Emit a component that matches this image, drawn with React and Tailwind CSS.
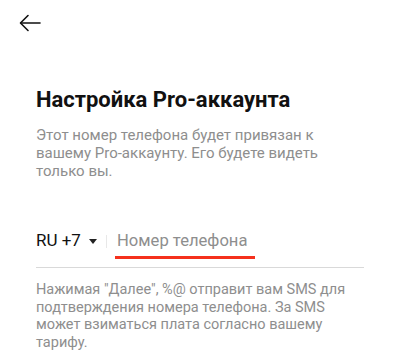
const font = { fontFamily: "Roboto, 'Noto Sans', sans-serif" };

export default function App() {
  return (
    <div className="w-[400px] h-[363px] bg-white overflow-hidden" style={font}>
      <div className="pt-[12px] pl-[18px]">
        <svg width="24" height="24" viewBox="0 0 24 24" fill="none" stroke="#111" strokeWidth="1.6" strokeLinecap="round" strokeLinejoin="round">
          <path d="M22 11H3" />
          <path d="M10 3.5L2.5 11L10 18.5" />
        </svg>
      </div>
      <div className="px-[36px]">
        <h1 className="mt-[51px] text-[22px] leading-[26px] font-bold text-[#111]">
          Настройка Pro-аккаунта
        </h1>
        <p className="mt-[13px] text-[15px] leading-[18px] text-[#8e8e8e]">
          Этот номер телефона будет привязан к вашему Pro-аккаунту. Его будете видеть только вы.
        </p>
        <div className="mt-[46px] flex items-center h-[30px]">
          <span className="w-[46px] text-[17px] text-[#111]">RU +7</span>
          <svg className="ml-[7px]" width="8" height="5" viewBox="0 0 8 5">
            <path d="M0 0H8L4 5Z" fill="#222" />
          </svg>
          <div className="ml-[9px] w-px h-[13px] bg-[#e8e8e8]" />
          <span className="ml-[10px] text-[16.6px] text-[#8e8e8e]">Номер телефона</span>
        </div>
        <div className="ml-[79px] w-[140px] h-[3px] bg-[#f5311d] mt-[0px]" />
        <div className="mt-[8px] h-px bg-[#d9d9d9] w-[328px]" />
        <p className="mt-[13px] text-[14.5px] leading-[17.5px] text-[#8e8e8e]">
          Нажимая "Далее", %@ отправит вам SMS для подтверждения номера телефона. За SMS может взиматься плата согласно вашему тарифу.
        </p>
      </div>
    </div>
  );
}
